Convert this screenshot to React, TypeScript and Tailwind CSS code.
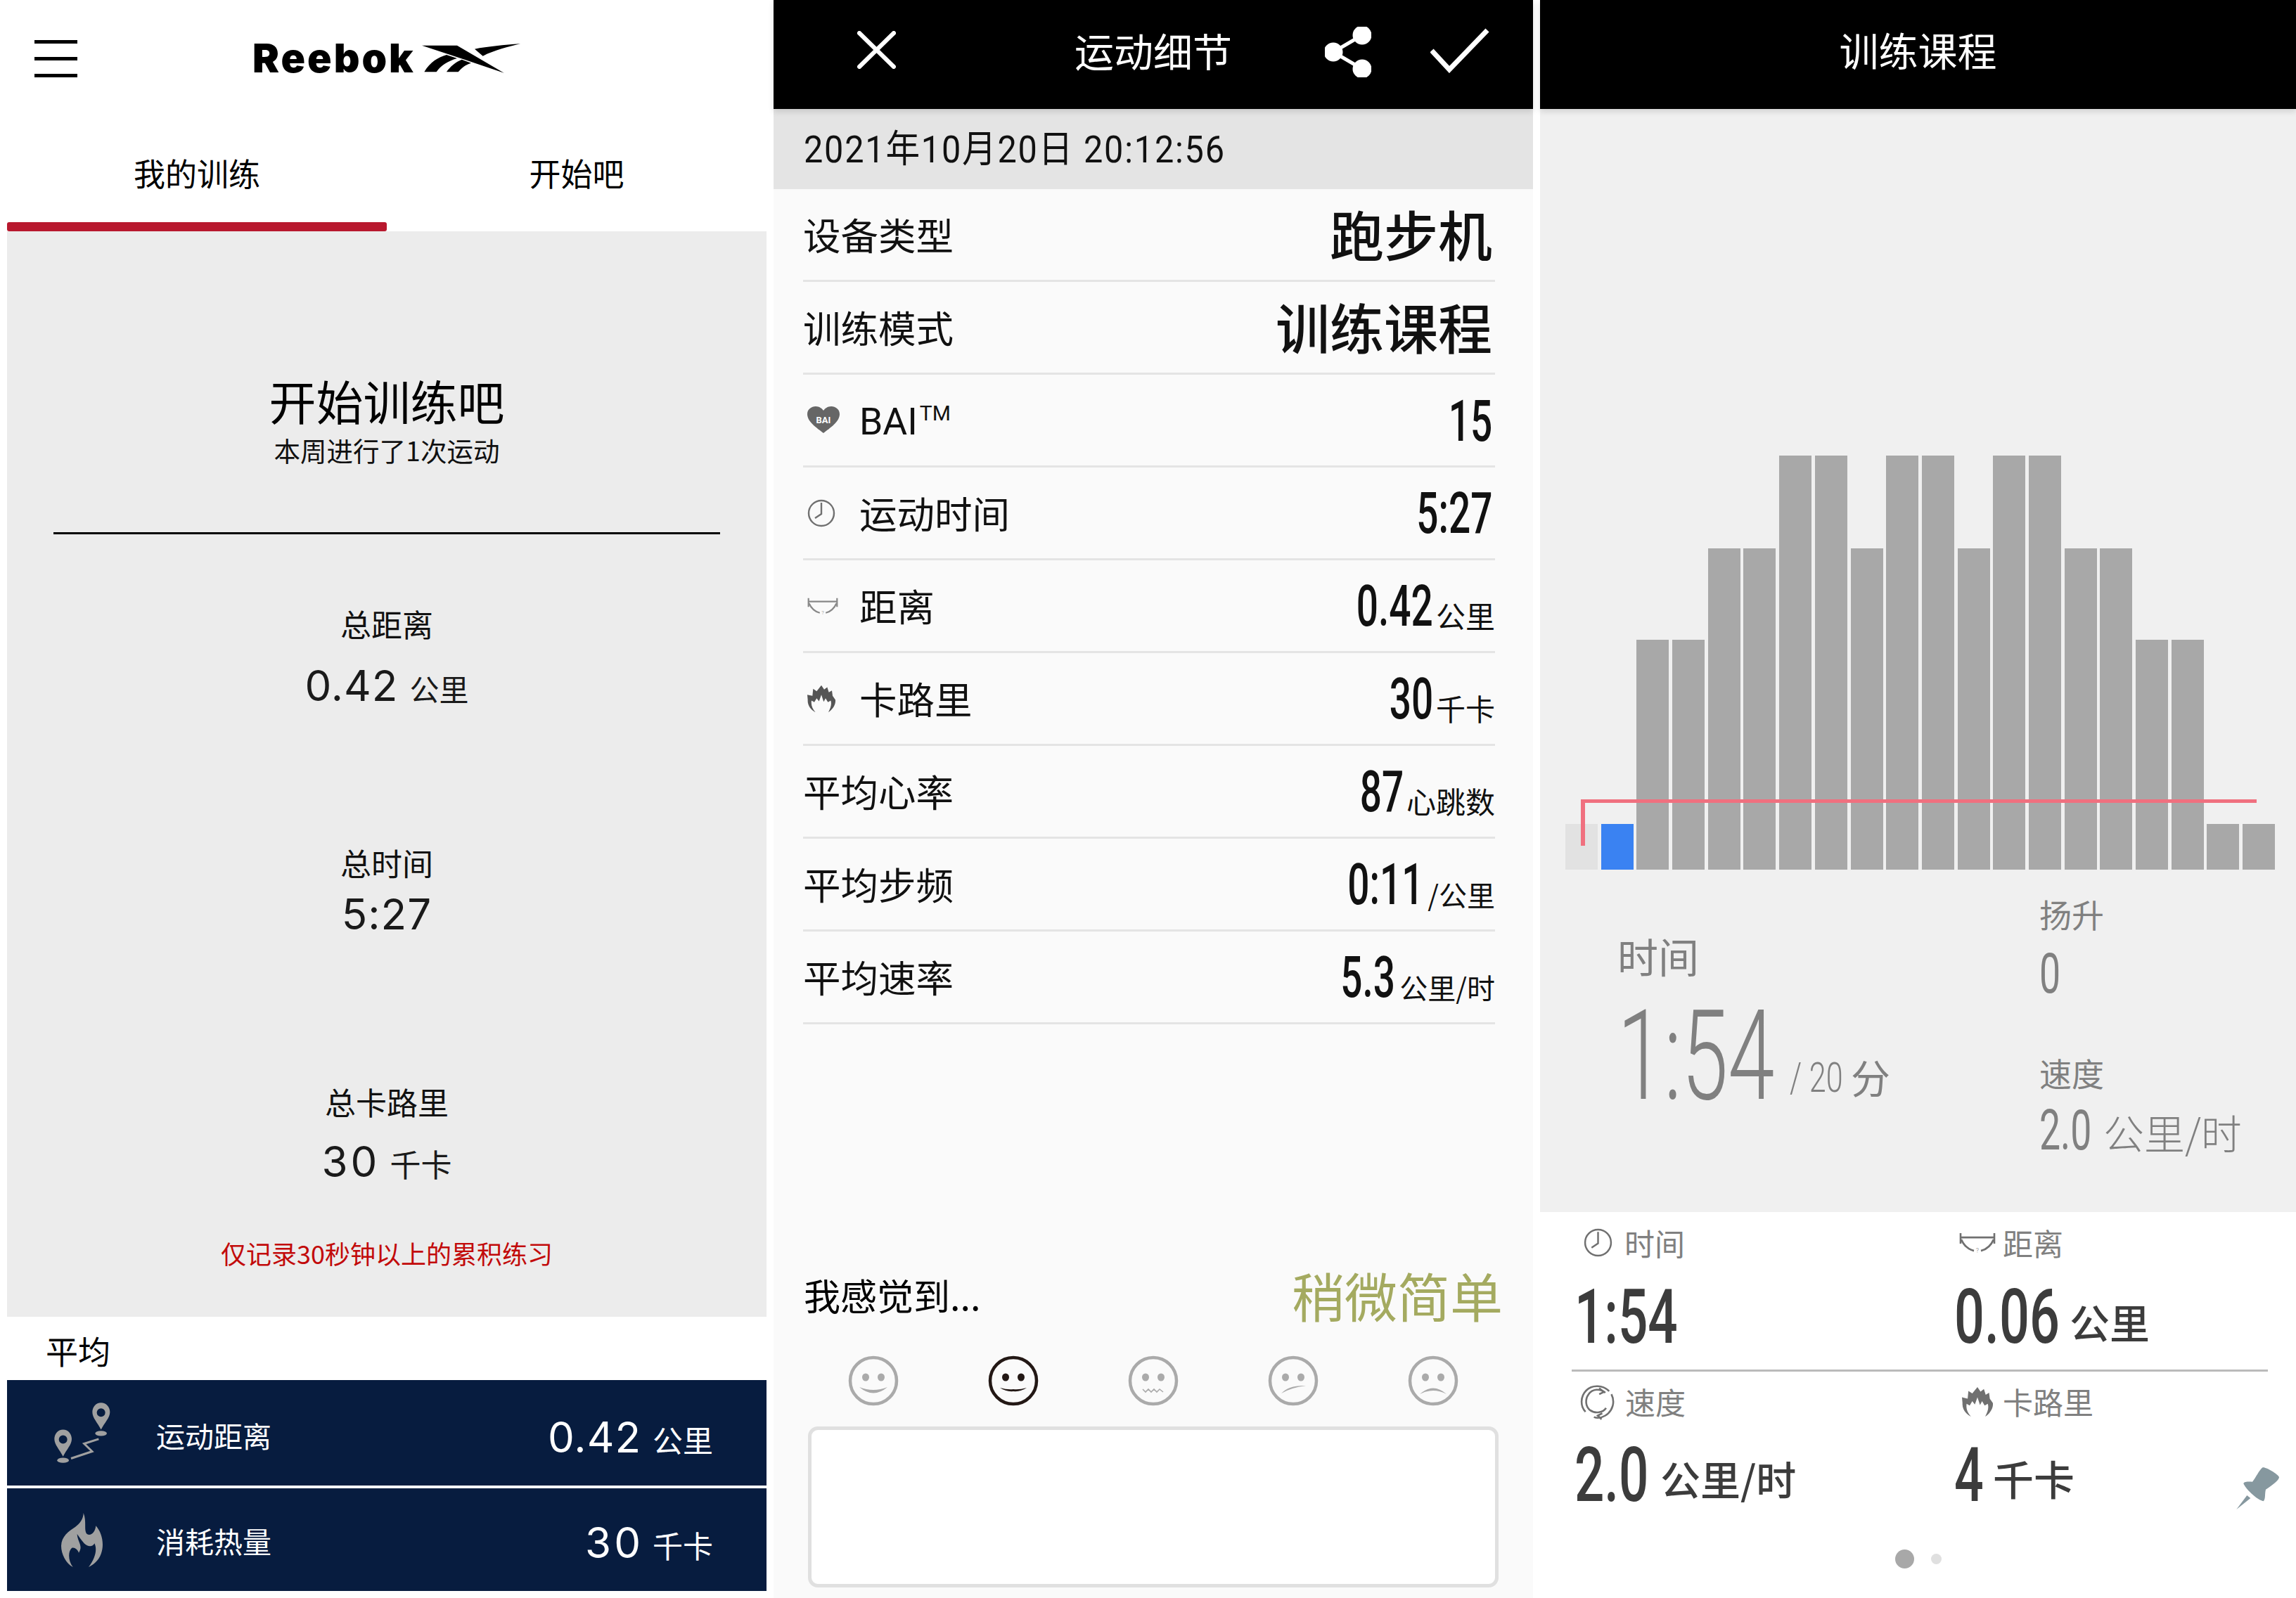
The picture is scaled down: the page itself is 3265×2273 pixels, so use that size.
import React from "react";

const cjk = "font-['Noto_Sans_CJK_SC',sans-serif]";
const din = "font-['Roboto','Noto_Sans_CJK_SC',sans-serif]";

const Hamburger = () => (
   <div className="flex flex-col gap-[19px] w-[61px]">
      <div className="h-[5px] bg-black" />
      <div className="h-[5px] bg-black" />
      <div className="h-[5px] bg-black" />
   </div>
);

const ReebokLogo = () => (
   <div className="flex items-center gap-[11px]">
      <span className="font-['Inter',sans-serif] font-black text-[57px] leading-[54px] tracking-[3px] text-black w-[230px] whitespace-nowrap">
         Reebok
      </span>
      <svg width="140" height="42" viewBox="780 38 420 124" fill="black">
         <path d="M780 45 L930 45 L1130 162 L955 103 Z" />
         <path d="M1200 38 C1130 42 1060 50 1005 60 L1040 90 C1090 65 1150 50 1200 38 Z" />
         <path d="M790 158 C815 115 850 95 885 85 L930 100 C890 112 860 130 842 158 Z" />
         <path d="M885 158 C900 135 925 115 950 105 L990 120 C965 128 950 140 935 158 Z" />
      </svg>
   </div>
);

const RouteIcon = () => (
   <svg width="80" height="87" viewBox="50 20 240 260" fill="#a0a0a0">
      <path
         fillRule="evenodd"
         d="M250 20 C272 20 288 38 288 60 C288 85 265 105 250 135 C235 105 213 85 213 60 C213 38 228 20 250 20 Z M250 44 A18 18 0 1 0 250 80 A18 18 0 1 0 250 44 Z"
      />
      <ellipse cx="250" cy="151" rx="25" ry="11" />
      <path
         fillRule="evenodd"
         d="M88 135 C110 135 125 153 125 175 C125 200 103 220 88 250 C73 220 51 200 51 175 C51 153 66 135 88 135 Z M88 159 A18 18 0 1 0 88 195 A18 18 0 1 0 88 159 Z"
      />
      <ellipse cx="88" cy="266" rx="25" ry="11" />
      <path d="M122 258 L212 228 L178 195 L240 175" fill="none" stroke="#a0a0a0" strokeWidth="9" />
   </svg>
);

const FlameIcon = () => (
   <svg width="60" height="77" viewBox="80 485 180 231" fill="#a0a0a0">
      <path d="M175 485 C190 520 175 560 190 575 C205 585 225 570 228 540 C255 570 265 620 250 660 C240 690 215 708 197 716 C225 680 235 640 222 615 C215 630 195 632 178 615 C165 600 155 585 148 575 C150 610 175 625 155 655 C150 640 135 630 125 635 C108 650 110 690 130 716 C100 700 80 660 80 625 C82 585 110 565 140 545 C160 530 175 510 175 485 Z" />
   </svg>
);

const SpikyFlame = ({ color, size }: { color: string; size: number }) => (
   <svg width={size} height={size} viewBox="0 0 120 115" fill={color}>
      <path d="M60 0 L72 18 L85 8 L92 30 L105 22 L108 45 L120 62 C122 85 105 105 90 115 C100 95 105 80 100 65 L88 72 L78 55 L70 70 L60 40 L50 68 L40 55 L30 72 L18 65 C15 85 22 100 35 115 C15 105 0 85 2 62 L0 40 L22 45 L25 15 L40 25 Z" />
   </svg>
);

const HeartIcon = () => (
   <svg width="46" height="39" viewBox="0 0 46 39">
      <path
         d="M23 38 C14 31 0 22 0 11 C0 4 6 0 12 0 C17 0 21 3 23 6 C25 3 29 0 34 0 C40 0 46 4 46 11 C46 22 32 31 23 38 Z"
         fill="#666666"
      />
      <text x="23" y="24" textAnchor="middle" fontSize="13" fontWeight="700" fill="#ffffff" fontFamily="Roboto, sans-serif">
         BAI
      </text>
   </svg>
);

const ClockIcon = ({ size }: { size: number }) => (
   <svg width={size} height={size} viewBox="0 0 40 40" fill="none" stroke="#707070" strokeWidth="2.4">
      <circle cx="20" cy="20" r="18" />
      <path d="M20 5 L20 21 L11 27" />
   </svg>
);

const DistanceIcon = ({ w, color }: { w: number; color: string }) => (
   <svg width={w} height={w * 0.62} viewBox="0 0 52 32" fill="none" stroke={color} strokeWidth="2.6">
      <path d="M2 3 L2 18 M50 3 L50 18 M2 9 L50 9" />
      <path d="M3 12 C7 21 13 26 21 28 M31 28 C39 26 45 21 49 12" />
      <text x="26" y="31" textAnchor="middle" fontSize="9" stroke="none" fill="#aaaaaa" fontFamily="Roboto, sans-serif">
         ?
      </text>
   </svg>
);

const SpeedIcon = () => (
   <svg width="50" height="52" viewBox="0 0 46 48" fill="none" stroke="#707070" strokeWidth="2.4">
      <path d="M38 10 C30 2 16 1 8 9 C0 17 0 30 7 37" />
      <path d="M41 14 C46 24 43 36 33 42 C28 45 23 46 18 44" />
      <path d="M33 12 C26 6 16 7 11 14 C6 21 7 30 13 35 C20 40 30 38 34 32" />
      <path d="M25 6 L31 11 L25 14 M28 47 L23 42 L29 39" />
   </svg>
);

const PinIcon = () => (
   <svg width="85" height="80" viewBox="0 0 255 240" fill="#86989f">
      <path d="M150 32 C160 25 215 58 222 72 C222 85 195 105 165 125 C160 145 165 165 155 175 C130 170 85 130 70 100 C72 90 95 92 108 92 C125 70 135 45 150 32 Z" />
      <path d="M85 150 L100 162 L40 210 Z" />
   </svg>
);

const Face = ({ mouth, active }: { mouth: number; active?: boolean }) => {
   const c = active ? "#231815" : "#aaaaaa";
   return (
      <svg width="74" height="74" viewBox="-37 -37 74 74">
         <circle cx="0" cy="0" r="33" fill="none" stroke={c} strokeWidth="4.5" />
         <ellipse cx="-11" cy="-5" rx="5" ry="5.5" fill={c} />
         <ellipse cx="11" cy="-5" rx="5" ry="5.5" fill={c} />
         {mouth === 0 && <path d="M-20 9 Q0 26 20 9 Q0 17 -20 9 Z" fill={c} />}
         {mouth === 1 && <path d="M-19 10 Q-8 13 0 12 Q8 13 19 10 Q10 16 0 15 Q-10 16 -19 10 Z" fill={c} />}
         {mouth === 2 && <path d="M-15 12 L-11 16 L-7 12 L-3 16 L1 12 L5 16 L9 12 L14 16" fill="none" stroke={c} strokeWidth="1.6" />}
         {mouth === 3 && <path d="M-17 18 Q-6 6 18 7 Q-4 10 -17 18 Z" fill={c} />}
         {mouth === 4 && <path d="M-19 19 Q0 2 19 19 Q0 9 -19 19 Z" fill={c} />}
      </svg>
   );
};

const LeftPanel = () => (
   <div className="w-[1100px] h-full bg-white pl-[10px] pr-[10px] flex flex-col">
      <div className="h-[166px] flex items-center pl-[39px] gap-[249px]">
         <Hamburger />
         <ReebokLogo />
      </div>
      <div className="flex h-[163px]">
         <div className="w-[540px] flex flex-col justify-between pt-[50px]">
            <div className="text-center text-[45px] leading-[60px] text-black">我的训练</div>
            <div className="h-[13px] rounded-[3px] bg-[#b8182e]" />
         </div>
         <div className="w-[540px] pt-[50px]">
            <div className="text-center text-[45px] leading-[60px] text-black">开始吧</div>
         </div>
      </div>
      <div className="h-[1544px] bg-[#ececec] flex flex-col">
         <div className="mt-[200px] text-center text-[67px] leading-[80px] text-black">开始训练吧</div>
         <div className="mt-[6px] text-center text-[37.5px] leading-[50px] text-[#111111]">本周进行了1次运动</div>
         <div className="mt-[92px] mx-[66px] h-[3px] bg-black" />
         <div className="mt-[102px]">
            <div className="text-center text-[44px] leading-[50px] text-[#111111]">总距离</div>
            <div className="mt-[28px] text-center text-[#1a1a1a] whitespace-nowrap leading-[70px]">
               <span className="font-['Inter',sans-serif] text-[60px] tracking-[1px]">0.42</span>
               <span className="text-[42px] ml-[16px]">公里</span>
            </div>
         </div>
         <div className="mt-[177px]">
            <div className="text-center text-[44px] leading-[50px] text-[#111111]">总时间</div>
            <div className="mt-[13px] text-center text-[#1a1a1a] leading-[70px]">
               <span className="font-['Inter',sans-serif] text-[60px] tracking-[1px]">5:27</span>
            </div>
         </div>
         <div className="mt-[192px]">
            <div className="text-center text-[44px] leading-[50px] text-[#111111]">总卡路里</div>
            <div className="mt-[25px] text-center text-[#1a1a1a] whitespace-nowrap leading-[70px]">
               <span className="font-['Inter',sans-serif] text-[60px] tracking-[4px]">30</span>
               <span className="text-[44px] ml-[14px]">千卡</span>
            </div>
         </div>
         <div className="mt-[55px] text-center text-[36px] leading-[50px] text-[#c20a0a]">仅记录30秒钟以上的累积练习</div>
      </div>
      <div className="h-[90px] flex items-center pl-[55px] pt-[4px] text-[46px] text-black">平均</div>
      <div className="h-[150px] bg-[#071c3f] flex items-center justify-between pl-[67px] pr-[76px]">
         <div className="flex items-center">
            <div className="w-[145px]">
               <RouteIcon />
            </div>
            <span className="text-[41px] text-white translate-y-[4px]">运动距离</span>
         </div>
         <div className="flex items-baseline text-white translate-y-[6px]">
            <span className="font-['Inter',sans-serif] text-[60px] tracking-[1px]">0.42</span>
            <span className="text-[43px] ml-[16px]">公里</span>
         </div>
      </div>
      <div className="h-[4px]" />
      <div className="h-[146px] bg-[#071c3f] flex items-center justify-between pl-[67px] pr-[76px]">
         <div className="flex items-center">
            <div className="w-[145px] pl-[10px]">
               <FlameIcon />
            </div>
            <span className="text-[41px] text-white translate-y-[2px]">消耗热量</span>
         </div>
         <div className="flex items-baseline text-white translate-y-[4px]">
            <span className="font-['Inter',sans-serif] text-[60px] tracking-[4px]">30</span>
            <span className="text-[43px] ml-[13px]">千卡</span>
         </div>
      </div>
   </div>
);

const Row = ({ icon, label, children }: { icon?: React.ReactNode; label: React.ReactNode; children: React.ReactNode }) => (
   <div className="h-[132px] border-b-[3px] border-[#e4e4e4] flex items-center justify-between">
      <div className="flex items-center text-[53.5px] text-[#111111]">
         {icon && <div className="w-[80px] pl-[6px] flex items-center">{icon}</div>}
         {label}
      </div>
      <div className="flex items-baseline text-[#111111] whitespace-nowrap">{children}</div>
   </div>
);

const Val = ({ children }: { children: string }) => (
   <span className={`${din} inline-block origin-right scale-x-[.67] text-[82px] leading-[100px] font-medium`}>{children}</span>
);

const MiddlePanel = () => (
   <div className="w-[1080px] h-full bg-[#fafafa] flex flex-col">
      <div className="relative h-[155px] bg-black flex items-center pb-[14px] shadow-[0_4px_8px_rgba(0,0,0,.12)]">
         <svg className="ml-[119px]" width="55" height="54" viewBox="0 0 55 54" stroke="white" strokeWidth="6" strokeLinecap="round">
            <path d="M3 3 L52 51 M52 3 L3 51" />
         </svg>
         <div className="ml-[254px] w-[224px] text-center text-[56px] leading-[60px] text-white whitespace-nowrap">运动细节</div>
         <svg className="ml-[132px] translate-y-[3px]" width="66" height="72" viewBox="0 0 66 72" fill="white" stroke="white" strokeWidth="5">
            <circle cx="53" cy="12" r="11" />
            <circle cx="12" cy="36" r="11" />
            <circle cx="53" cy="60" r="11" />
            <path d="M53 12 L12 36 L53 60" fill="none" />
         </svg>
         <svg className="ml-[84px] translate-y-[1px]" width="84" height="64" viewBox="0 0 84 64" fill="none" stroke="white" strokeWidth="7">
            <path d="M2 32 L27 59 L81 3" />
         </svg>
      </div>
      <div className="h-[114px] bg-[#e4e4e4] flex items-center pl-[43px] pt-[2px]">
         <span className={`${din} inline-block origin-left scale-x-[.9] text-[54px] leading-[60px] tracking-[2px] text-[#111111] whitespace-nowrap`}>
            2021年10月20日 20:12:56
         </span>
      </div>
      <div className="pl-[42px] pr-[54px]">
         <Row label="设备类型">
            <span className="text-[77px] leading-[100px] font-medium pr-[4px] -translate-y-[2px]">跑步机</span>
         </Row>
         <Row label="训练模式">
            <span className="text-[77px] leading-[100px] font-medium pr-[4px] -translate-y-[2px]">训练课程</span>
         </Row>
         <Row
            icon={<HeartIcon />}
            label={
               <span className={`${din} flex items-start whitespace-nowrap translate-y-[3px]`}>
                  <span>BAI</span>
                  <span className="text-[30px] leading-[40px] ml-[3px] mt-[8px]">TM</span>
               </span>
            }
         >
            <span className="pr-[4px] translate-y-[1px]">
               <Val>15</Val>
            </span>
         </Row>
         <Row icon={<ClockIcon size={40} />} label="运动时间">
            <span className="pr-[4px]">
               <Val>5:27</Val>
            </span>
         </Row>
         <Row icon={<DistanceIcon w={44} color="#888888" />} label="距离">
            <Val>0.42</Val>
            <span className="text-[42px] ml-[4px] translate-y-[3px]">公里</span>
         </Row>
         <Row icon={<SpikyFlame color="#555555" size={40} />} label="卡路里">
            <Val>30</Val>
            <span className="text-[42px] ml-[4px] translate-y-[3px]">千卡</span>
         </Row>
         <Row label="平均心率">
            <Val>87</Val>
            <span className="text-[42px] ml-[4px] translate-y-[3px]">心跳数</span>
         </Row>
         <Row label="平均步频">
            <Val>0:11</Val>
            <span className="text-[40px] ml-[6px] translate-y-[3px]">/公里</span>
         </Row>
         <Row label="平均速率">
            <Val>5.3</Val>
            <span className="text-[40px] ml-[6px] translate-y-[3px]">公里/时</span>
         </Row>
      </div>
      <div className="mt-[335px] pl-[43px] pr-[43px] h-[100px] flex items-center justify-between">
         <span className="text-[52px] text-black">我感觉到...</span>
         <span className="text-[75px] text-[#a4aa60] whitespace-nowrap">稍微简单</span>
      </div>
      <div className="mt-[35px] grid grid-cols-[199px_199px_199px_199px_199px] pl-[42px]">
         <div className="flex justify-center"><Face mouth={0} /></div>
         <div className="flex justify-center"><Face mouth={1} active /></div>
         <div className="flex justify-center"><Face mouth={2} /></div>
         <div className="flex justify-center"><Face mouth={3} /></div>
         <div className="flex justify-center"><Face mouth={4} /></div>
      </div>
      <div className="mt-[28px] ml-[49px] w-[982px] h-[229px] bg-white border-[5px] border-[#e0e0e0] rounded-[14px]" />
   </div>
);

const bars = [
   "h-[65px] bg-[#e2e2e2]",
   "h-[65px] bg-[#3a82f2]",
   "h-[327px] bg-[#a8a8a8]",
   "h-[327px] bg-[#a8a8a8]",
   "h-[457px] bg-[#a8a8a8]",
   "h-[457px] bg-[#a8a8a8]",
   "h-[589px] bg-[#a8a8a8]",
   "h-[589px] bg-[#a8a8a8]",
   "h-[457px] bg-[#a8a8a8]",
   "h-[589px] bg-[#a8a8a8]",
   "h-[589px] bg-[#a8a8a8]",
   "h-[457px] bg-[#a8a8a8]",
   "h-[589px] bg-[#a8a8a8]",
   "h-[589px] bg-[#a8a8a8]",
   "h-[457px] bg-[#a8a8a8]",
   "h-[457px] bg-[#a8a8a8]",
   "h-[327px] bg-[#a8a8a8]",
   "h-[327px] bg-[#a8a8a8]",
   "h-[65px] bg-[#a8a8a8]",
   "h-[65px] bg-[#a8a8a8]",
];

const Chart = () => (
   <div className="relative ml-[36px] mt-[493px] h-[589px] flex items-end gap-[4.7px]">
      {bars.map((b, i) => (
         <div key={i} className={`w-[46px] ${b}`} />
      ))}
      <div className="absolute left-[22px] top-[489px] w-[961px] h-[66px] border-t-[5px] border-l-[6px] border-[#f0707f]" />
   </div>
);

const RightPanel = () => (
   <div className="w-[1075px] h-full bg-white flex flex-col">
      <div className="relative h-[155px] bg-black flex items-center justify-center pb-[16px] shadow-[0_4px_8px_rgba(0,0,0,.12)] text-[56px] text-white">
         训练课程
      </div>
      <div className="h-[1569px] bg-[#f0f0f0] flex flex-col text-[#808080]">
         <Chart />
         <div className="flex">
            <div className="w-[710px] pl-[110px]">
               <div className="mt-[82px] text-[58px] leading-[80px]">时间</div>
               <div className="mt-[14px] flex items-baseline whitespace-nowrap">
                  <span className={`${din} w-[245px] inline-block origin-left scale-x-[.67] text-[178px] leading-[178px] font-light`}>1:54</span>
                  <span className={`${din} w-[87px] inline-block origin-left scale-x-[.72] text-[60px] font-light -translate-y-[10px]`}>/ 20</span>
                  <span className="text-[56px] -translate-y-[8px]">分</span>
               </div>
            </div>
            <div>
               <div className="mt-[32px] text-[46px] leading-[60px]">扬升</div>
               <div className={`${din} mt-[16px] origin-left scale-x-[.67] text-[80px] leading-[80px]`}>0</div>
               <div className="mt-[70px] text-[46px] leading-[60px]">速度</div>
               <div className="mt-[13px] flex items-baseline leading-[80px] whitespace-nowrap">
                  <span className={`${din} w-[91px] inline-block origin-left scale-x-[.67] text-[80px]`}>2.0</span>
                  <span className="text-[58px] font-light">公里/时</span>
               </div>
            </div>
         </div>
      </div>
      <div className="relative flex-1">
         <div className="flex mt-[18px]">
            <div className="w-[593px] pl-[49px]">
               <div className="flex items-center h-[50px] pl-[13px] gap-[17px] text-[43px] text-[#808080]">
                  <ClockIcon size={41} />
                  时间
               </div>
               <div className="mt-[26px] flex items-baseline text-[#3c3c3c]">
                  <span className={`${din} inline-block origin-left scale-x-[.69] text-[108px] leading-[110px] font-medium`}>1:54</span>
               </div>
            </div>
            <div className="-ml-[4px]">
               <div className="flex items-center h-[50px] pl-[7px] gap-[10px] text-[43px] text-[#808080]">
                  <DistanceIcon w={52} color="#707070" />
                  距离
               </div>
               <div className="mt-[26px] flex items-baseline text-[#3c3c3c] whitespace-nowrap">
                  <span className={`${din} w-[164px] inline-block origin-left scale-x-[.7] text-[108px] leading-[110px] font-medium`}>0.06</span>
                  <span className="text-[57px] font-medium -translate-y-[6px]">公里</span>
               </div>
            </div>
         </div>
         <div className="mt-[19px] ml-[45px] w-[990px] h-[3px] bg-[#bbbbbb]" />
         <div className="flex mt-[18px]">
            <div className="w-[593px] pl-[49px]">
               <div className="flex items-center h-[50px] pl-[8px] gap-[14px] text-[43px] text-[#808080]">
                  <SpeedIcon />
                  速度
               </div>
               <div className="mt-[24px] flex items-baseline text-[#3c3c3c] whitespace-nowrap">
                  <span className={`${din} w-[122px] inline-block origin-left scale-x-[.69] text-[108px] leading-[110px] font-medium`}>2.0</span>
                  <span className="text-[57px] font-medium -translate-y-[8px]">公里/时</span>
               </div>
            </div>
            <div className="-ml-[4px]">
               <div className="flex items-center h-[50px] pl-[11px] gap-[14px] text-[43px] text-[#808080]">
                  <SpikyFlame color="#707070" size={44} />
                  卡路里
               </div>
               <div className="mt-[24px] flex items-baseline text-[#3c3c3c] whitespace-nowrap">
                  <span className={`${din} w-[55px] inline-block origin-left scale-x-[.68] text-[108px] leading-[110px] font-medium`}>4</span>
                  <span className="text-[58px] font-medium -translate-y-[8px]">千卡</span>
               </div>
            </div>
         </div>
         <div className="mt-[50px] flex items-center justify-center gap-[24px]">
            <div className="w-[27px] h-[27px] rounded-full bg-[#a8a8a8]" />
            <div className="w-[15px] h-[15px] rounded-full bg-[#e0e0e0]" />
         </div>
         <div className="absolute left-[977px] top-[353px]">
            <PinIcon />
         </div>
      </div>
   </div>
);

export default function App() {
   return (
      <div className={`w-[3265px] h-[2273px] flex bg-white overflow-hidden ${cjk}`}>
         <LeftPanel />
         <MiddlePanel />
         <div className="w-[10px]" />
         <RightPanel />
      </div>
   );
}
